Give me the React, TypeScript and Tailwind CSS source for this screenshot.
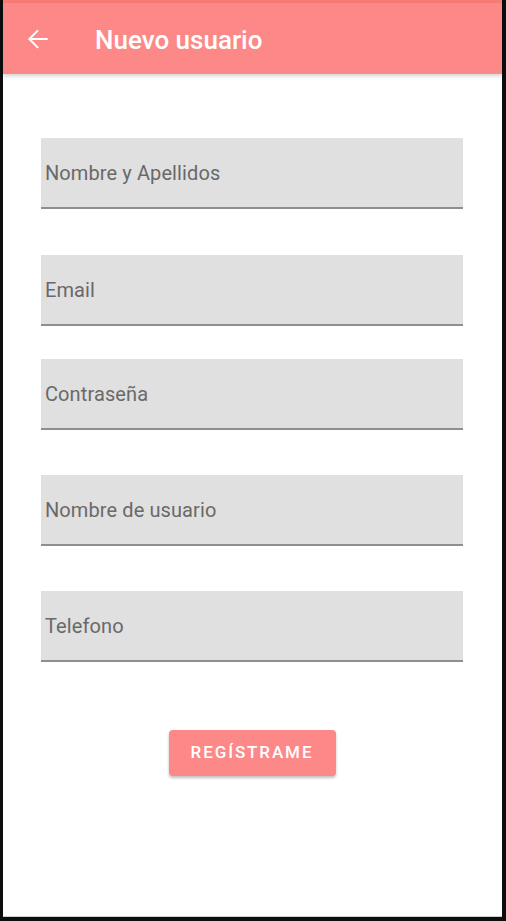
import React from "react";

const fields = [
  { label: "Nombre y Apellidos", mt: "mt-[64px]" },
  { label: "Email", mt: "mt-[46px]" },
  { label: "Contraseña", mt: "mt-[33px]" },
  { label: "Nombre de usuario", mt: "mt-[45px]" },
  { label: "Telefono", mt: "mt-[45px]" },
];

export default function App() {
  return (
    <div className="w-[506px] h-[921px] bg-[#0d0d0d] pl-[3px] pr-[4px] pb-[4px] flex" style={{ fontFamily: "Roboto, 'Noto Sans', sans-serif" }}>
      <div className="flex-1 bg-white flex flex-col border-b border-[#cfcfcf]">
        <div className="h-[3px] bg-[#f87c74]" />
        <div className="h-[71px] bg-[#fd8888] flex items-center shadow-[0_2px_4px_rgba(0,0,0,0.18)] relative z-10">
          <div className="w-[92px] pl-[22px] flex items-center">
            <svg width="26" height="26" viewBox="0 0 24 24" fill="none">
              <path d="M20 12H4.5M11.5 4.5L4 12l7.5 7.5" stroke="white" strokeWidth="1.8" strokeLinecap="square" />
            </svg>
          </div>
          <span className="text-white text-[26px] font-medium tracking-[0px] mt-[3px]">Nuevo usuario</span>
        </div>
        <div className="flex flex-col pl-[38px] pr-[39px]">
          {fields.map((f) => (
            <div key={f.label} className={`${f.mt} h-[71px] bg-[#e0e0e0] border-b-[2px] border-[#8e8e8e] flex items-center pl-[4px]`}>
              <span className="text-[20px] tracking-[0.1px] text-[#696969]">{f.label}</span>
            </div>
          ))}
          <div className="flex justify-center mt-[68px]">
            <button className="w-[167px] h-[46px] bg-[#fd8888] rounded-[4px] text-white text-[17px] font-medium tracking-[1.9px] shadow-[0_2px_3px_rgba(0,0,0,0.25)]">
              REGÍSTRAME
            </button>
          </div>
        </div>
      </div>
    </div>
  );
}
